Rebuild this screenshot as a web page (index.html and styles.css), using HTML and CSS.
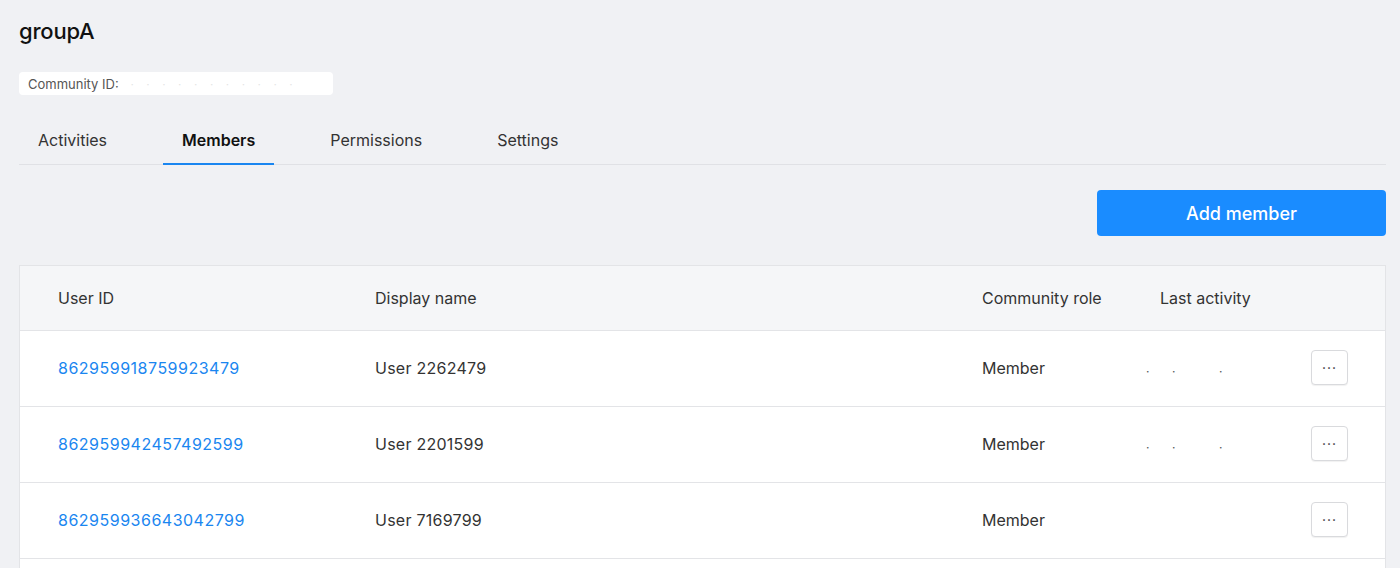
FILE: index.html
```html
<!DOCTYPE html>
<html>
<head>
<meta charset="utf-8">
<link rel="stylesheet" href="styles.css">
</head>
<body>
<div class="page">
  <h1 class="title">groupA</h1>
  <div class="chip"><span class="chip-label">Community ID:</span><span class="chip-dots"><i>·</i><i>·</i><i>·</i><i>·</i><i>·</i><i>·</i><i>·</i><i>·</i><i>·</i><i>·</i><i>·</i></span></div>
  <nav class="tabs">
    <div class="tab">Activities</div>
    <div class="tab active">Members</div>
    <div class="tab">Permissions</div>
    <div class="tab">Settings</div>
  </nav>
  <div class="actions">
    <button class="add-btn">Add member</button>
  </div>
  <div class="table">
    <div class="row head">
      <div>User ID</div>
      <div>Display name</div>
      <div>Community role</div>
      <div>Last activity</div>
      <div></div>
    </div>
    <div class="row">
      <div class="link">862959918759923479</div>
      <div class="num">User 2262479</div>
      <div>Member</div>
      <div class="redact"><i class="d1">·</i><i class="d2">·</i><i class="d3">·</i></div>
      <div><button class="more">···</button></div>
    </div>
    <div class="row">
      <div class="link">862959942457492599</div>
      <div class="num">User 2201599</div>
      <div>Member</div>
      <div class="redact"><i class="d1">·</i><i class="d2">·</i><i class="d3">·</i></div>
      <div><button class="more">···</button></div>
    </div>
    <div class="row">
      <div class="link">862959936643042799</div>
      <div class="num">User 7169799</div>
      <div>Member</div>
      <div class="redact"></div>
      <div><button class="more">···</button></div>
    </div>
    <div class="row"></div>
  </div>
</div>
</body>
</html>
```

FILE: styles.css
```css
html, body {
  margin: 0;
  padding: 0;
  background: #f0f1f4;
  font-family: Inter, "Liberation Sans", sans-serif;
  color: #333;
  overflow: hidden;
}
.page {
  padding: 17px 14px 0 19px;
}
.title {
  margin: 0;
  font-size: 22px;
  font-weight: 500;
  color: #111;
  line-height: 28px;
  letter-spacing: -0.2px;
}
.chip {
  margin-top: 27px;
  width: 314px;
  height: 23px;
  box-sizing: border-box;
  background: #fff;
  border-radius: 4px;
  display: flex;
  align-items: center;
  padding-left: 9px;
  font-size: 13px;
  color: #555;
}
.chip-dots {
  margin-left: 12px;
  color: #e2e2e2;
  font-size: 10px;
  display: flex;
  gap: 13px;
}
.chip-dots i {
  font-style: normal;
}
.tabs {
  margin-top: 19px;
  display: flex;
  gap: 37px;
  border-bottom: 1px solid #e0e1e5;
  height: 50px;
}
.tab {
  padding: 1px 19px 0;
  font-size: 16px;
  line-height: 50px;
  color: #333;
  box-sizing: border-box;
  height: 51px;
}
.tab.active {
  font-weight: 600;
  color: #111;
  border-bottom: 2px solid #1a86f0;
}
.actions {
  display: flex;
  justify-content: flex-end;
  margin-top: 25px;
}
.add-btn {
  width: 289px;
  height: 46px;
  background: #1a8cff;
  border: none;
  border-radius: 4px;
  color: #fff;
  font-family: Inter, "Liberation Sans", sans-serif;
  font-size: 18px;
  font-weight: 500;
}
.table {
  margin-top: 29px;
  background: #fff;
  border: 1px solid #e3e4e7;
  border-bottom: none;
}
.row {
  display: grid;
  grid-template-columns: 317px 607px 178px 1fr 37px;
  align-items: center;
  padding: 0 37px 0 38px;
  height: 75px;
  border-bottom: 1px solid #e3e4e7;
  font-size: 16px;
  color: #333;
}
.row.head {
  height: 64px;
  background: #f5f6f8;
}
.row > div {
  margin-top: -2px;
}
.row.head > div {
  margin-top: 0;
}
.num {
  letter-spacing: 0.25px;
}
.link {
  color: #1a86f0;
  letter-spacing: 0.5px;
}
.redact {
  position: relative;
  height: 20px;
}
.redact i {
  position: absolute;
  top: 6px;
  font-style: normal;
  font-size: 12px;
  color: #555;
}
.redact .d1 { left: -14px; }
.redact .d2 { left: 12px; }
.redact .d3 { left: 59px; }
.more {
  width: 37px;
  height: 35px;
  background: #fff;
  border: 1px solid #d9dadd;
  border-radius: 4px;
  box-shadow: 0 1px 1px rgba(0,0,0,0.06);
  font-size: 14px;
  color: #333;
  padding: 0;
  letter-spacing: 1px;
  font-family: Inter, "Liberation Sans", sans-serif;
}
```
